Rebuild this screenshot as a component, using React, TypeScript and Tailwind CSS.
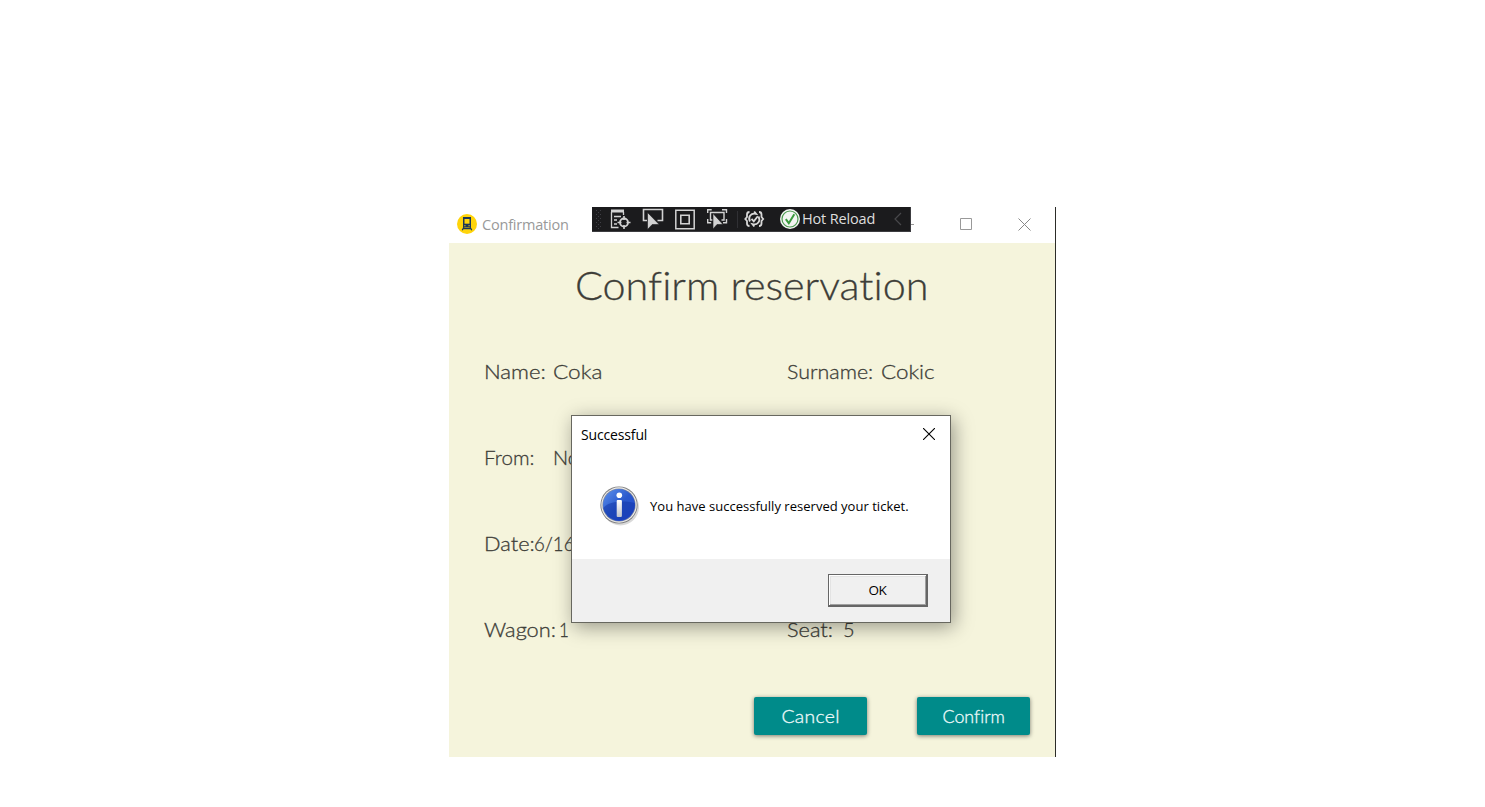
import React from "react";

const gothic = "font-['Lato',sans-serif] font-light [-webkit-text-stroke:0.3px] [font-variant-ligatures:none]";
const segoe = "font-['Open_Sans',sans-serif] font-normal [-webkit-text-stroke:0px]";

function TrainIcon() {
  return (
    <svg width="20" height="20" viewBox="0 0 20 20" className="shrink-0">
      <circle cx="10" cy="10" r="10" fill="#ffd40a" />
      <path d="M6 3h8v10.500H6z" fill="#1c3658" />
      <path d="M7.500 5h5v4.700h-5z" fill="#ffd40a" />
      <path d="M7.300 11.300h1.200v1H7.300zM11.500 11.300h1.200v1h-1.200z" fill="#ffd40a" />
      <path d="M7 13l-1.800 3.300M13 13l1.800 3.300M6.500 14.700h7" stroke="#1c3658" strokeWidth="1.200" fill="none" />
    </svg>
  );
}

function DebugBar() {
  return (
    <div className="absolute left-[143px] top-0 flex h-[25px] w-[319px] items-center border-b border-r border-[#3c3c40] bg-[#1b1b1d]">
      <svg width="188" height="24" viewBox="0 0 188 24" className="shrink-0" fill="none">
        <g fill="#3f3f45">
          {[3, 7, 11, 15, 19].map((y) => (
            <React.Fragment key={y}>
              <rect x="4" y={y} width="1" height="1" />
              <rect x="8" y={y} width="1" height="1" />
              <rect x="6" y={y + 2} width="1" height="1" />
            </React.Fragment>
          ))}
        </g>
        <g stroke="#d2d2d2" strokeWidth="1.3">
          <path d="M19.5 5v15.500h7M31.500 5v3M22 9.500h7M22 13h3M22 17h3" />
          <path d="M19 4h13" strokeWidth="3" />
          <circle cx="32" cy="15.500" r="4" strokeWidth="1.800" />
          <path d="M32 9v4M32 18v4M25.500 15.500h4M34.500 15.500h4" strokeWidth="1.600" />
        </g>
        <path d="M55 13.500h-3.500V2.500H70.500v11h-5" stroke="#d2d2d2" strokeWidth="1.600" />
        <path d="M55.500 5.500v17l4.700-5h7z" fill="#d2d2d2" stroke="#1b1b1d" strokeWidth="0.600" />
        <path d="M83.800 3.300h18.400v18.400H83.800z" stroke="#d2d2d2" strokeWidth="1.500" />
        <path d="M88.800 8.300h8.400v8.400h-8.400z" stroke="#d2d2d2" strokeWidth="1.600" />
        <path d="M120.500 13h-2V5.500h13.500V13h-2.500" stroke="#d2d2d2" strokeWidth="1.400" />
        <path d="M115.700 6V2.700h4M130 2.700h4.500V6M134.500 12v3.700h-3.500M115.700 12v3.700h3.500" stroke="#d2d2d2" strokeWidth="1.400" />
        <path d="M121 6.500v15.500l4-4.500h6z" fill="#d2d2d2" stroke="#1b1b1d" strokeWidth="0.600" />
        <path d="M145.500 4v17" stroke="#303034" />
        <g stroke="#d8d8d8" strokeWidth="1.800">
          <path d="M157.500 5c-2 0-2.500 1-2.500 2.500V10l-1.700 2 1.700 2v2.500c0 1.500.5 2.500 2.500 2.500M167 5c2 0 2.500 1 2.500 2.500V10l1.700 2-1.700 2v2.500c0 1.500-.5 2.500-2.500 2.500" />
          <path d="M158 14.500c-2.500-4.500 1-9 6-7.700l-1.800-2.300M166.500 9.500c2.500 4.500-1 9-6 7.700l1.800 2.300" />
          <path d="M159.500 11.800l2.300 2.500 4-5" />
        </g>
      </svg>
      <svg width="20" height="20" viewBox="0 0 20 20" className="shrink-0" fill="none">
        <circle cx="10" cy="10" r="10" fill="#f3f5f3" />
        <circle cx="10" cy="10" r="8" stroke="#4c9a50" strokeWidth="1.200" />
        <path d="M5.800 10.200l3 4 5.500-9" stroke="#399a3d" strokeWidth="2" />
      </svg>
      <span className={`${segoe} ml-[2px] w-[75px] whitespace-nowrap text-[14.500px] leading-5 tracking-[-0.150px] text-[#dedede]`}>Hot Reload</span>
      <svg width="10" height="14" viewBox="0 0 10 14" className="ml-[16px]" fill="none">
        <path d="M8 1L2 7l6 6" stroke="#48484b" strokeWidth="1.200" />
      </svg>
    </div>
  );
}

function TitleBar() {
  return (
    <header className="relative flex h-9 items-center bg-white pb-[2px] pl-2 pr-6">
      <TrainIcon />
      <span className={`${segoe} ml-[5px] mt-[2px] whitespace-nowrap text-[14.500px] leading-5 tracking-[-0.2px] text-[#999]`}>Confirmation</span>
      <div className="ml-auto flex items-center gap-[46px]">
        <svg width="13" height="13" viewBox="0 0 13 13">
          <path d="M0 6.500h13" stroke="#999" />
        </svg>
        <svg width="12" height="12" viewBox="0 0 12 12" fill="none">
          <path d="M.5.500h11v11H.5z" stroke="#999" />
        </svg>
        <svg width="13" height="13" viewBox="0 0 13 13" fill="none">
          <path d="M.5.500l12 12M12.500.500l-12 12" stroke="#888" />
        </svg>
      </div>
      <DebugBar />
    </header>
  );
}

type FieldProps = { label: string; value: string; labelWidth: string; labelScale?: string; valueScale?: string };

function Field({ label, value, labelWidth, labelScale = "scale-x-[1.09]", valueScale = "scale-x-[1.12]" }: FieldProps) {
  return (
    <div className="-mt-[2px] flex items-center whitespace-nowrap text-[20px] leading-6 text-[#3d3d38]">
      <span className={labelWidth}>
        <span className={`inline-block origin-left ${labelScale}`}>{label}</span>
      </span>
      <span className={`inline-block origin-left ${valueScale}`}>{value}</span>
    </div>
  );
}

function ActionButton({ children, textStyle }: { children: string; textStyle: string }) {
  return (
    <button className="flex h-[38px] w-[113px] items-center justify-center rounded-[2px] bg-[#008b8a] pt-[2px] text-[17px] text-[#eefafa] shadow-[0_1px_4px_rgba(0,0,0,0.5)]">
      <span className={textStyle}>{children}</span>
    </button>
  );
}

function InfoIcon() {
  return (
    <svg width="40" height="40" viewBox="0 0 40 40" className="shrink-0">
      <defs>
        <linearGradient id="ball" x1="0" y1="0" x2="1" y2="1">
          <stop offset="0" stopColor="#5f93ee" />
          <stop offset="0.5" stopColor="#2a59cc" />
          <stop offset="1" stopColor="#2347d4" />
        </linearGradient>
        <linearGradient id="stem" x1="0" y1="0" x2="0" y2="1">
          <stop offset="0" stopColor="#fff" />
          <stop offset="1" stopColor="#bfc3cc" />
        </linearGradient>
      </defs>
      <circle cx="20.500" cy="21" r="18.500" fill="#000" opacity="0.150" />
      <circle cx="19" cy="19" r="18.600" fill="#808080" />
      <circle cx="19" cy="19" r="17.700" fill="#eee" />
      <circle cx="19" cy="19" r="16.600" fill="#888c98" />
      <circle cx="19" cy="19" r="16" fill="url(#ball)" />
      <path d="M3.300 22C8 16 20 14 34.800 17A16 16 0 0 1 3.300 22z" fill="#1237a8" opacity="0.550" />
      <circle cx="19.300" cy="9.300" r="2.800" fill="#fff" />
      <rect x="16.700" y="14" width="5.200" height="17" rx="1" fill="url(#stem)" />
    </svg>
  );
}

function MessageBox() {
  return (
    <section className={`${segoe} absolute left-[122px] top-[208px] flex h-[208px] w-[380px] flex-col border border-[#67675f] bg-white text-black shadow-[3px_4px_18px_rgba(0,0,0,0.38)]`}>
      <div className="flex h-9 items-center justify-between pl-[9px] pr-[15px]">
        <span className="mt-[2px] whitespace-nowrap text-[14px] leading-5 tracking-[-0.15px]">Successful</span>
        <svg width="12" height="12" viewBox="0 0 12 12" fill="none">
          <path d="M0 0l12 12M12 0L0 12" stroke="#000" strokeWidth="1.100" />
        </svg>
      </div>
      <div className="flex h-[107px] items-center pl-7">
        <InfoIcon />
        <span className="ml-[10px] whitespace-nowrap text-[13px] leading-5 tracking-[0.020px]">You have successfully reserved your ticket.</span>
      </div>
      <div className="flex flex-1 items-start justify-end bg-[#f0f0f0] pr-[22px] pt-[15px]">
        <button className="h-[33px] w-[100px] border border-b-2 border-r-2 border-[#666] bg-[#f0f0f0] pt-[1px] text-[13.500px] tracking-[-0.3px] shadow-[inset_1px_1px_0_#fff,inset_-1px_-1px_0_#a0a0a0,inset_2px_2px_0_#e3e3e3]">
          OK
        </button>
      </div>
    </section>
  );
}

export default function App() {
  return (
    <div className="flex h-[807px] w-[1485px] items-start overflow-hidden bg-white pl-[449px] pt-[207px]">
      <main className={`${gothic} relative flex h-[550px] w-[607px] flex-col border-r border-[#2c2c28] bg-[#f5f4dc]`}>
        <TitleBar />
        <h1 className="flex h-[86px] items-center justify-center whitespace-nowrap pb-[1px] text-[39px] text-[#3d3d38]">
          <span className="scale-x-[1.06]">Confirm reservation</span>
        </h1>
        <div className="grid auto-rows-[86px] grid-cols-[303px_1fr] pl-[35px]">
          <Field label="Name:" value="Coka" labelWidth="w-[69px]" labelScale="scale-x-[1.11]" valueScale="scale-x-[1.13]" />
          <Field label="Surname:" value="Cokic" labelWidth="w-[94px]" labelScale="scale-x-[1.07]" />
          <Field label="From:" value="No" labelWidth="w-[69px]" labelScale="scale-x-[1.03]" valueScale="scale-x-[1]" />
          <div />
          <Field label="Date:" value="6/16" labelWidth="w-[50px]" valueScale="scale-x-[0.93]" />
          <div />
          <Field label="Wagon:" value="1" labelWidth="w-[75px]" valueScale="scale-x-[0.85]" />
          <Field label="Seat:" value="5" labelWidth="w-[56px]" valueScale="scale-x-[1]" />
        </div>
        <footer className="flex justify-end gap-[50px] pr-[25px] pt-6">
          <ActionButton textStyle="scale-x-[1.14] tracking-[0.3px]">Cancel</ActionButton>
          <ActionButton textStyle="scale-x-[1.05]">Confirm</ActionButton>
        </footer>
        <MessageBox />
      </main>
    </div>
  );
}
